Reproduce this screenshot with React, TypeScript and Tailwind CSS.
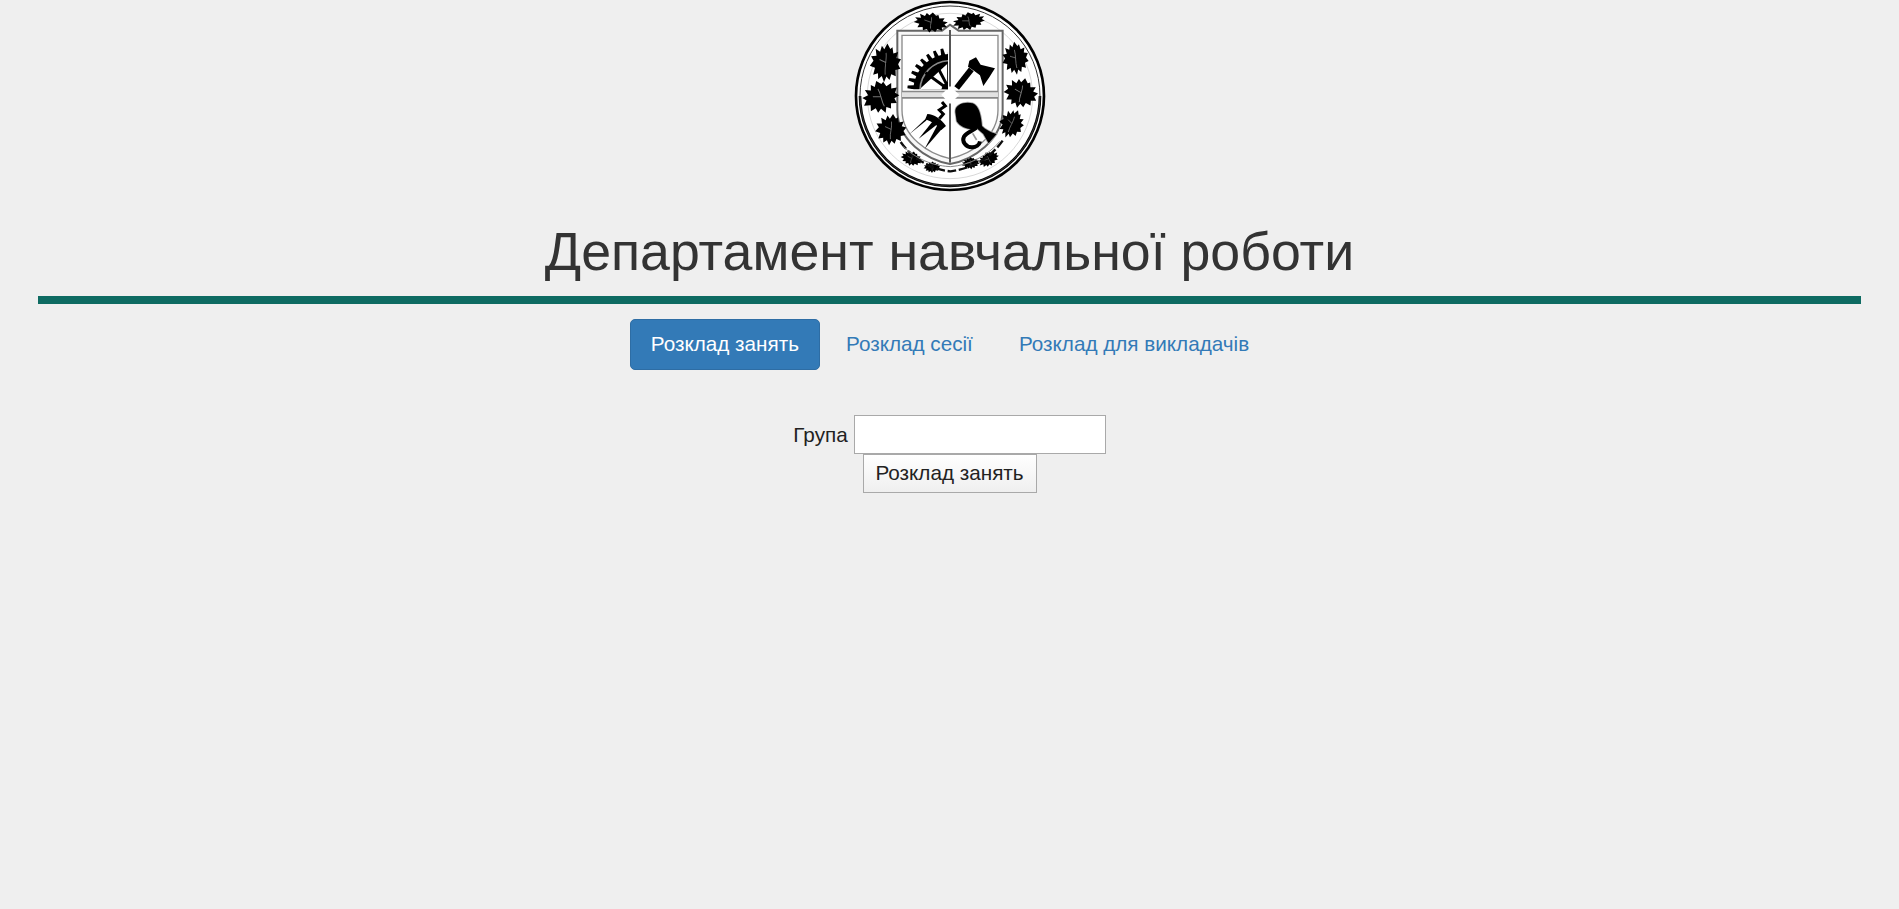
import React from "react";

const LEAF =
  "M2 -46 L12 -34 L18 -38 L22 -24 L36 -28 L32 -14 L46 -12 L38 0 L46 10 L32 14 L34 28 L20 24 L16 38 L6 30 L0 44 L-8 30 L-18 38 L-20 24 L-34 28 L-30 12 L-46 8 L-36 -4 L-44 -14 L-28 -16 L-32 -32 L-18 -26 L-14 -40 L-6 -32 Z";

function Leaf({ x, y, sx = 1, sy = 1, r = 0 }: { x: number; y: number; sx?: number; sy?: number; r?: number }) {
  return (
    <g transform={`translate(${x} ${y}) rotate(${r}) scale(${sx} ${sy})`}>
      <path d={LEAF} fill="#000" />
      <path d="M0 -24 C4 -8 -2 10 2 26 M1 -2 L-18 -8" stroke="#777" strokeWidth="2.5" fill="none" />
    </g>
  );
}

function gearPath(cx: number, cy: number, r1: number, r2: number, a0: number, a1: number, n: number) {
  const p = (r: number, a: number) => {
    const t = (a * Math.PI) / 180;
    return `${(cx + r * Math.cos(t)).toFixed(1)} ${(cy + r * Math.sin(t)).toFixed(1)}`;
  };
  const step = (a1 - a0) / n;
  let d = `M${p(r1, a0)}`;
  for (let i = 0; i < n; i++) {
    const a = a0 + i * step;
    d += ` L${p(r1, a + step * 0.2)} L${p(r2, a + step * 0.3)} L${p(r2, a + step * 0.65)} L${p(r1, a + step * 0.8)} L${p(r1, a + step)}`;
  }
  return `${d} L${p(r1 - 14, a1)} L${p(r1 - 14, a0)} Z`;
}

function Crest() {
  return (
    <svg viewBox="0 0 192 192" className="block h-[192px] w-[192px] shrink-0" aria-label="Герб">
      <defs>
        <filter id="soft" x="-5%" y="-5%" width="110%" height="110%">
          <feGaussianBlur stdDeviation="0.7" />
        </filter>
        <clipPath id="gearClip">
          <rect x="190" y="110" width="134" height="158" />
        </clipPath>
      </defs>
      <g transform="scale(0.3333) translate(-42 0)" filter="url(#soft)">
        <circle cx="330" cy="288" r="286" fill="#fff" />
        <circle cx="330" cy="288" r="282" fill="none" stroke="#000" strokeWidth="8" />
        <path d="M60 288 A270 270 0 0 0 600 288" fill="none" stroke="#000" strokeWidth="8" />
        <circle cx="330" cy="288" r="270" fill="none" stroke="#333" strokeWidth="3" />
        <circle cx="330" cy="288" r="248" fill="none" stroke="#c4c4c4" strokeWidth="2" />

        {/* Shield */}
        <path d="M172 92 H306 L330 74 L356 92 H488 V330 C488 420 400 480 330 492 C260 480 172 420 172 330 Z" fill="#f8f8f8" stroke="#666" strokeWidth="6" />
        <path d="M186 106 H474 V330 C474 410 395 462 330 476 C265 462 186 410 186 330 Z" fill="#fff" stroke="#8a8a8a" strokeWidth="4" />
        <path d="M330 90 V488" stroke="#555" strokeWidth="6" />
        <path d="M186 284 H474" stroke="#888" strokeWidth="24" />
        <path d="M186 284 H474" stroke="#e2e2e2" strokeWidth="14" />
        <path d="M330 258 L358 284 L330 312 L304 284 Z" fill="#fff" />

        {/* Gear */}
        <g clipPath="url(#gearClip)">
          <path d={gearPath(330, 272, 110, 128, 180, 275, 9)} fill="#000" />
          <path d="M240 272 A90 90 0 0 1 330 182" fill="none" stroke="#8a8a8a" strokeWidth="5" />
          <path d="M330 272 L256 218 M330 272 L290 196 M330 272 L244 272 M326 272 V186" stroke="#000" strokeWidth="9" />
          <circle cx="330" cy="272" r="26" fill="#000" />
        </g>

        {/* Axe */}
        <path d="M388 182 L408 172 L422 194 L465 205 L448 232 L430 258 L420 226 L402 212 L384 200 Z" fill="#000" />
        <path d="M350 264 L394 208" stroke="#000" strokeWidth="18" />

        {/* Pitchfork */}
        <path d="M262 342 C282 342 304 358 318 378 L304 390 C290 374 274 364 256 358 Z" fill="#000" />
        <path d="M270 344 L208 403 L258 362 Z" fill="#000" />
        <path d="M286 354 L236 416 L298 368 Z" fill="#000" />
        <path d="M296 368 L254 446 L310 382 Z" fill="#000" />
        <path d="M298 356 L310 342 L298 330 L316 318 L306 306" stroke="#000" strokeWidth="9" fill="none" />

        {/* Bucket and hook */}
        <path d="M346 336 C344 314 372 304 398 310 C418 316 424 352 426 378 C436 388 450 396 470 402 L446 430 L430 402 L412 386 C392 392 362 384 350 364 Z" fill="#000" stroke="#a8a8a8" strokeWidth="5" paintOrder="stroke" />
        <path d="M408 384 C396 394 380 398 372 410 C364 424 378 442 396 442 C408 442 418 434 420 424" fill="none" stroke="#000" strokeWidth="12" />
        <path d="M398 400 L410 420" stroke="#999" strokeWidth="5" />

        {/* Vine leaves */}
        <Leaf x={272} y={68} sx={1.1} sy={0.68} r={8} />
        <Leaf x={386} y={64} sx={1.05} sy={0.6} r={-10} />
        <Leaf x={136} y={190} sx={1} sy={1.3} r={4} />
        <Leaf x={122} y={292} sx={1.2} sy={1.1} r={-18} />
        <Leaf x={152} y={390} sx={1} sy={1.05} r={6} />
        <Leaf x={526} y={176} sx={0.85} sy={1.1} r={-6} />
        <Leaf x={542} y={280} sx={1.1} sy={1.02} r={14} />
        <Leaf x={514} y={372} sx={0.78} sy={1} r={24} />
        <Leaf x={214} y={476} sx={0.7} sy={0.5} r={16} />
        <Leaf x={276} y={502} sx={0.55} sy={0.38} r={0} />
        <Leaf x={392} y={490} sx={0.58} sy={0.4} r={-8} />
        <Leaf x={446} y={478} sx={0.7} sy={0.48} r={-28} />
        <path d="M182 426 C220 480 280 510 332 514 C385 508 450 480 492 416" fill="none" stroke="#111" strokeWidth="7" strokeDasharray="26 8" />
        <path d="M190 440 C240 486 290 498 332 500 C385 496 440 470 480 424" fill="none" stroke="#888" strokeWidth="3" />
      </g>
    </svg>
  );
}

export default function App() {
  return (
    <div className="min-h-[909px] bg-[#efefef] px-[38px] text-center font-['Liberation_Sans',Arial,sans-serif] text-[#333]">
      <div className="flex justify-center">
        <Crest />
      </div>
      <h1 className="mt-[28px] text-[53.7px] font-normal leading-[62px] text-[#333]">Департамент навчальної роботи</h1>
      <div className="mt-[14px] h-2 bg-[#0e6b62]" />
      <nav className="mt-[15px] flex justify-center gap-[5px] text-[20.7px] leading-[29px]">
        <a href="#" className="rounded-[5px] border border-[#2e6da4] bg-[#337ab7] px-[20px] pt-[9px] pb-[11px] text-white">Розклад занять</a>
        <a href="#" className="px-[21px] pt-[10px] pb-[12px] text-[#337ab7]">Розклад сесії</a>
        <a href="#" className="px-[20px] pt-[10px] pb-[12px] text-[#337ab7]">Розклад для викладачів</a>
      </nav>
      <form className="mt-[45px] flex flex-col items-center text-[20.7px]">
        <div className="flex items-center">
          <label className="mr-[6px] text-[#222]">Група</label>
          <input className="h-[39px] w-[252px] border border-[#a9a9a9] bg-white" type="text" />
        </div>
        <button type="button" className="h-[39px] w-[174px] border border-[#a9a9a9] bg-gradient-to-b from-white to-[#efefef] pb-[2px] text-[20.7px] text-[#222]">Розклад занять</button>
      </form>
    </div>
  );
}
